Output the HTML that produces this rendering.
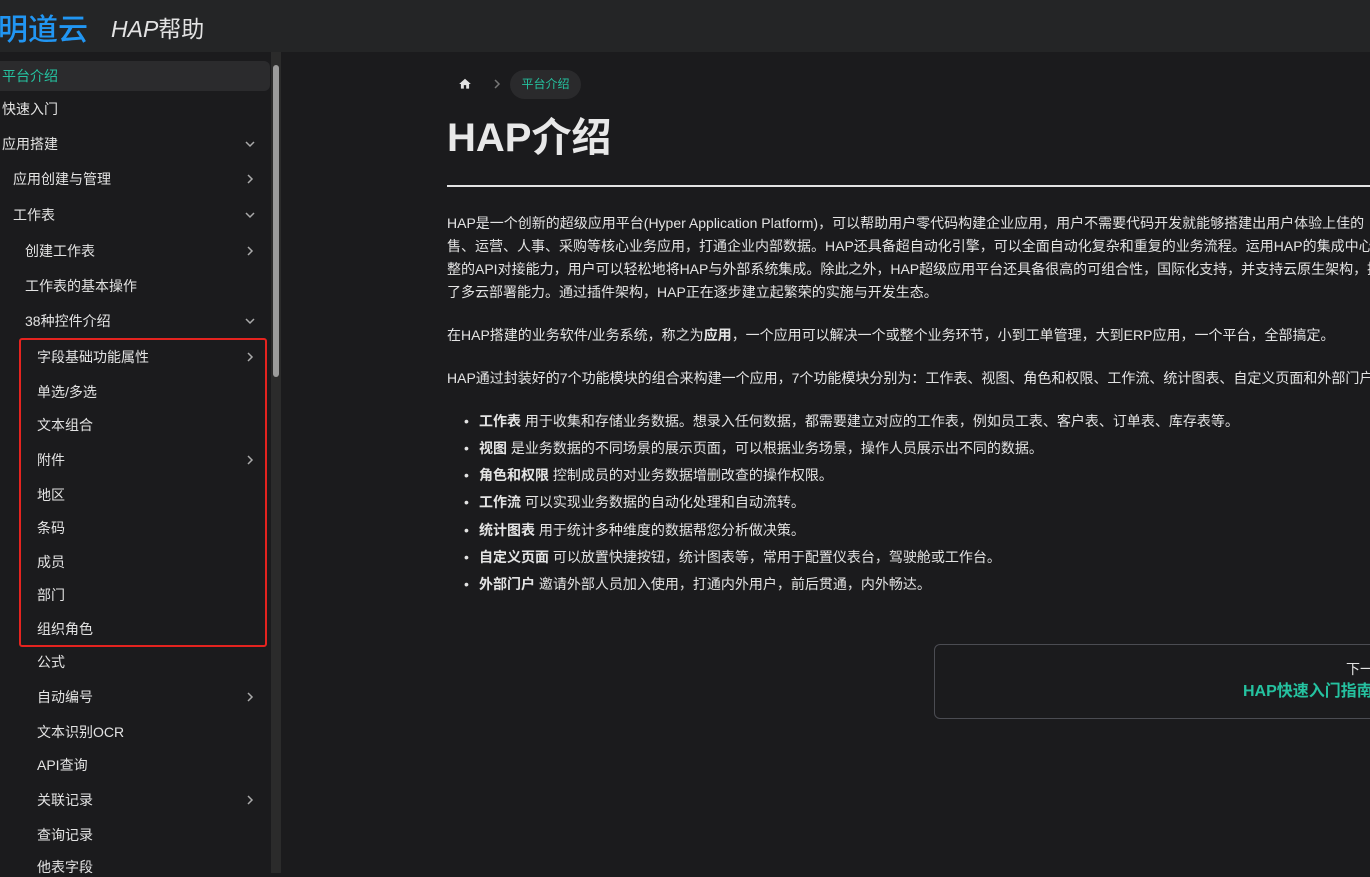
<!DOCTYPE html>
<html><head><meta charset="utf-8"><style>
*{margin:0;padding:0;box-sizing:border-box}
html,body{width:1370px;height:873px;overflow:hidden;background:#1b1b1d;font-family:"Liberation Sans","Noto Sans CJK SC",sans-serif;color:#e3e3e3}
.hdr{position:absolute;left:0;top:0;width:1370px;height:52px;background:#242526}
.logo{position:absolute;left:-2px;top:5px;font-size:30px;color:#2196f3;font-weight:500;letter-spacing:0px}
.htitle{position:absolute;left:111px;top:10px;font-size:23px;color:#e3e3e3}
.htitle i{font-style:italic}
.side{position:absolute;left:0;top:52px;width:271px;height:821px;background:#1b1b1d}
.it{position:absolute;left:0;width:270px;font-size:14px;line-height:20px;white-space:nowrap;color:#e3e3e3}
.it svg{position:absolute;right:14px;top:4px}
.act{background:#2b2b2d;border-radius:0 6px 6px 0;height:30px;line-height:30px;top:9px!important;color:#25c2a0}
.track{position:absolute;left:271px;top:52px;width:10px;height:821px;background:#2b2b2b}
.thumb{position:absolute;left:273px;top:65px;width:6px;height:312px;background:#9b9b9b;border-radius:3px}
.red{position:absolute;left:19px;top:338px;width:248px;height:309px;border:2px solid #e5231f;border-radius:3px}
.m{position:absolute;white-space:nowrap;font-size:14px;line-height:20px;color:#e3e3e3}
b{font-weight:bold}
</style></head><body>
<div class="hdr"><div class="logo">明道云</div><div class="htitle"><i>HAP</i>帮助</div></div>
<div class="side">
<div class="it act" style="padding-left:2px">平台介绍</div>
</div>
<div class="track"></div><div class="thumb"></div>
<div class="red"></div>

<div class="it" style="top:99px;left:2px">快速入门</div>
<div class="it" style="top:134px;left:2px">应用搭建<svg width="12" height="12" viewBox="0 0 12 12" style="right:16px"><path d="M2 4l4 4 4-4" stroke="#aaa" stroke-width="1.5" fill="none"/></svg></div>
<div class="it" style="top:169px;padding-left:13px">应用创建与管理<svg width="12" height="12" viewBox="0 0 12 12"><path d="M4 2l4 4-4 4" stroke="#aaa" stroke-width="1.5" fill="none"/></svg></div>
<div class="it" style="top:205px;padding-left:13px">工作表<svg width="12" height="12" viewBox="0 0 12 12"><path d="M2 4l4 4 4-4" stroke="#aaa" stroke-width="1.5" fill="none"/></svg></div>
<div class="it" style="top:241px;padding-left:25px">创建工作表<svg width="12" height="12" viewBox="0 0 12 12"><path d="M4 2l4 4-4 4" stroke="#aaa" stroke-width="1.5" fill="none"/></svg></div>
<div class="it" style="top:276px;padding-left:25px">工作表的基本操作</div>
<div class="it" style="top:311px;padding-left:25px">38种控件介绍<svg width="12" height="12" viewBox="0 0 12 12"><path d="M2 4l4 4 4-4" stroke="#aaa" stroke-width="1.5" fill="none"/></svg></div>
<div class="it" style="top:347px;padding-left:37px">字段基础功能属性<svg width="12" height="12" viewBox="0 0 12 12"><path d="M4 2l4 4-4 4" stroke="#aaa" stroke-width="1.5" fill="none"/></svg></div>
<div class="it" style="top:382px;padding-left:37px">单选/多选</div>
<div class="it" style="top:415px;padding-left:37px">文本组合</div>
<div class="it" style="top:450px;padding-left:37px">附件<svg width="12" height="12" viewBox="0 0 12 12"><path d="M4 2l4 4-4 4" stroke="#aaa" stroke-width="1.5" fill="none"/></svg></div>
<div class="it" style="top:485px;padding-left:37px">地区</div>
<div class="it" style="top:518px;padding-left:37px">条码</div>
<div class="it" style="top:552px;padding-left:37px">成员</div>
<div class="it" style="top:585px;padding-left:37px">部门</div>
<div class="it" style="top:619px;padding-left:37px">组织角色</div>
<div class="it" style="top:652px;padding-left:37px">公式</div>
<div class="it" style="top:687px;padding-left:37px">自动编号<svg width="12" height="12" viewBox="0 0 12 12"><path d="M4 2l4 4-4 4" stroke="#aaa" stroke-width="1.5" fill="none"/></svg></div>
<div class="it" style="top:722px;padding-left:37px">文本识别OCR</div>
<div class="it" style="top:755px;padding-left:37px">API查询</div>
<div class="it" style="top:790px;padding-left:37px">关联记录<svg width="12" height="12" viewBox="0 0 12 12"><path d="M4 2l4 4-4 4" stroke="#aaa" stroke-width="1.5" fill="none"/></svg></div>
<div class="it" style="top:825px;padding-left:37px">查询记录</div>
<div class="it" style="top:857px;padding-left:37px">他表字段</div>

<svg style="position:absolute;left:458px;top:77px" width="14" height="14" viewBox="0 0 24 24"><path d="M10 20v-6h4v6h5v-8h3L12 3 2 12h3v8z" fill="#e3e3e3"/></svg>
<svg style="position:absolute;left:492px;top:79px" width="10" height="10" viewBox="0 0 10 10"><path d="M3 1l4 4-4 4" stroke="#777" stroke-width="1.5" fill="none"/></svg>
<div style="position:absolute;left:510px;top:70px;width:71px;height:29px;border-radius:15px;background:#2a2a2c;color:#25c2a0;font-size:12px;line-height:29px;text-align:center">平台介绍</div>

<div class="m" style="left:447px;top:112px;font-size:40px;line-height:52px;font-weight:bold;color:#e8e8e8">HAP介绍</div>
<div style="position:absolute;left:447px;top:185px;width:923px;height:2px;background:#e3e3e3"></div>

<div class="m" style="left:447px;top:213px">HAP是一个创新的超级应用平台(Hyper Application Platform)，可以帮助用户零代码构建企业应用，用户不需要代码开发就能够搭建出用户体验上佳的</div>
<div class="m" style="left:447px;top:236px">售、运营、人事、采购等核心业务应用，打通企业内部数据。HAP还具备超自动化引擎，可以全面自动化复杂和重复的业务流程。运用HAP的集成中心，</div>
<div class="m" style="left:447px;top:259px">整的API对接能力，用户可以轻松地将HAP与外部系统集成。除此之外，HAP超级应用平台还具备很高的可组合性，国际化支持，并支持云原生架构，提</div>
<div class="m" style="left:447px;top:282px">了多云部署能力。通过插件架构，HAP正在逐步建立起繁荣的实施与开发生态。</div>
<div class="m" style="left:447px;top:325px">在HAP搭建的业务软件/业务系统，称之为<b>应用</b>，一个应用可以解决一个或整个业务环节，小到工单管理，大到ERP应用，一个平台，全部搞定。</div>
<div class="m" style="left:447px;top:368px">HAP通过封装好的7个功能模块的组合来构建一个应用，7个功能模块分别为：工作表、视图、角色和权限、工作流、统计图表、自定义页面和外部门户。</div>

<div class="m" style="left:464px;top:411px">•</div><div class="m" style="left:479px;top:411px"><b>工作表</b> 用于收集和存储业务数据。想录入任何数据，都需要建立对应的工作表，例如员工表、客户表、订单表、库存表等。</div>
<div class="m" style="left:464px;top:438px">•</div><div class="m" style="left:479px;top:438px"><b>视图</b> 是业务数据的不同场景的展示页面，可以根据业务场景，操作人员展示出不同的数据。</div>
<div class="m" style="left:464px;top:465px">•</div><div class="m" style="left:479px;top:465px"><b>角色和权限</b> 控制成员的对业务数据增删改查的操作权限。</div>
<div class="m" style="left:464px;top:492px">•</div><div class="m" style="left:479px;top:492px"><b>工作流</b> 可以实现业务数据的自动化处理和自动流转。</div>
<div class="m" style="left:464px;top:520px">•</div><div class="m" style="left:479px;top:520px"><b>统计图表</b> 用于统计多种维度的数据帮您分析做决策。</div>
<div class="m" style="left:464px;top:547px">•</div><div class="m" style="left:479px;top:547px"><b>自定义页面</b> 可以放置快捷按钮，统计图表等，常用于配置仪表台，驾驶舱或工作台。</div>
<div class="m" style="left:464px;top:574px">•</div><div class="m" style="left:479px;top:574px"><b>外部门户</b> 邀请外部人员加入使用，打通内外用户，前后贯通，内外畅达。</div>

<div style="position:absolute;left:934px;top:644px;width:500px;height:75px;border:1px solid #4b4c52;border-radius:6px"></div>
<div class="m" style="left:1346px;top:659px">下一页</div>
<div class="m" style="left:1243px;top:681px;font-size:16px;line-height:22px;font-weight:bold;color:#25c2a0">HAP快速入门指南 »</div>
</body></html>
